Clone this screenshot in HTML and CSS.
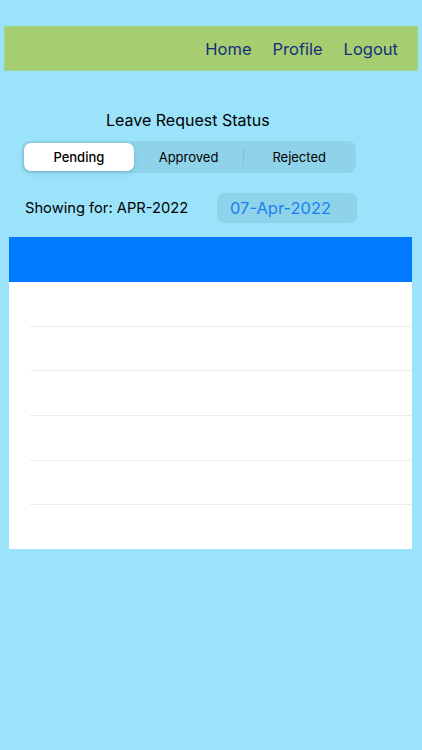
FILE: index.html
```html
<!DOCTYPE html>
<html lang="en">
<head>
<meta charset="utf-8">
<title>Leave Request Status</title>
<link rel="stylesheet" href="styles.css">
</head>
<body>
<div class="page">
  <nav class="navbar">
    <a class="nav-link" href="#">Home</a>
    <a class="nav-link" href="#">Profile</a>
    <a class="nav-link" href="#">Logout</a>
  </nav>
  <h1 class="title">Leave Request Status</h1>
  <div class="segmented">
    <div class="seg seg-active">Pending</div>
    <div class="seg">Approved</div>
    <div class="seg-divider"></div>
    <div class="seg">Rejected</div>
  </div>
  <div class="filter-row">
    <span class="showing">Showing for: APR-2022</span>
    <button class="date-btn">07-Apr-2022</button>
  </div>
  <div class="table">
    <div class="table-head"></div>
    <div class="table-body">
      <div class="row"></div>
      <div class="row"></div>
      <div class="row"></div>
      <div class="row"></div>
      <div class="row"></div>
      <div class="row last"></div>
    </div>
  </div>
</div>
</body>
</html>
```
FILE: styles.css
```css
html, body {
  margin: 0;
  padding: 0;
}
body {
  background: #9be3fb;
  font-family: Inter, "Liberation Sans", sans-serif;
  width: 422px;
  height: 750px;
  overflow: hidden;
}
.page {
  padding-top: 26px;
  display: flex;
  flex-direction: column;
}
.navbar {
  margin: 0 4px 0 4px;
  height: 45px;
  box-sizing: border-box;
  background: #a6ce70;
  border: 1px solid #a0d48d;
  display: flex;
  justify-content: flex-end;
  align-items: center;
  gap: 21px;
  padding-right: 19px;
}
.nav-link {
  color: #15307c;
  text-decoration: none;
  font-size: 16.5px;
  line-height: 22px;
  padding-top: 1px;
}
.title {
  margin: 38px 0 0 0;
  font-size: 16px;
  font-weight: 400;
  color: #000;
  line-height: 22px;
  padding-left: 106px;
}
.segmented {
  margin: 10px 0 0 22px;
  width: 334px;
  height: 32px;
  box-sizing: border-box;
  border-radius: 8px;
  background: #8fd3ea;
  padding: 2px;
  display: flex;
  align-items: center;
}
.seg {
  flex: 1;
  height: 28px;
  display: flex;
  align-items: center;
  justify-content: center;
  font-size: 13px;
  font-weight: 400;
  color: #000;
  border-radius: 7px;
}
.seg-active {
  background: #fff;
  font-weight: 500;
  box-shadow: 0 2px 6px rgba(0,0,0,0.12), 0 0 0 0.5px rgba(0,0,0,0.04);
}
.seg-divider {
  width: 1px;
  height: 17px;
  background: #7fc0d6;
}
.filter-row {
  margin: 20px 0 0 25px;
  display: flex;
  align-items: center;
}
.showing {
  font-size: 14.7px;
  color: #000;
  width: 192px;
}
.date-btn {
  width: 140px;
  height: 30px;
  border: none;
  border-radius: 7px;
  background: #8fd3ea;
  color: #1a7ff2;
  font-family: Inter, "Liberation Sans", sans-serif;
  font-size: 16.5px;
  padding: 0;
  text-align: left;
  padding-left: 13px;
}
.table {
  margin: 14px 10px 0 9px;
  display: flex;
  flex-direction: column;
}
.table-head {
  height: 45px;
  background: #007aff;
}
.table-body {
  background: #fff;
  display: flex;
  flex-direction: column;
}
.row {
  height: 44.7px;
  margin-left: 21px;
  box-sizing: border-box;
  border-bottom: 1px solid #ececec;
}
.row.last {
  border-bottom: none;
  height: 44px;
}
```
